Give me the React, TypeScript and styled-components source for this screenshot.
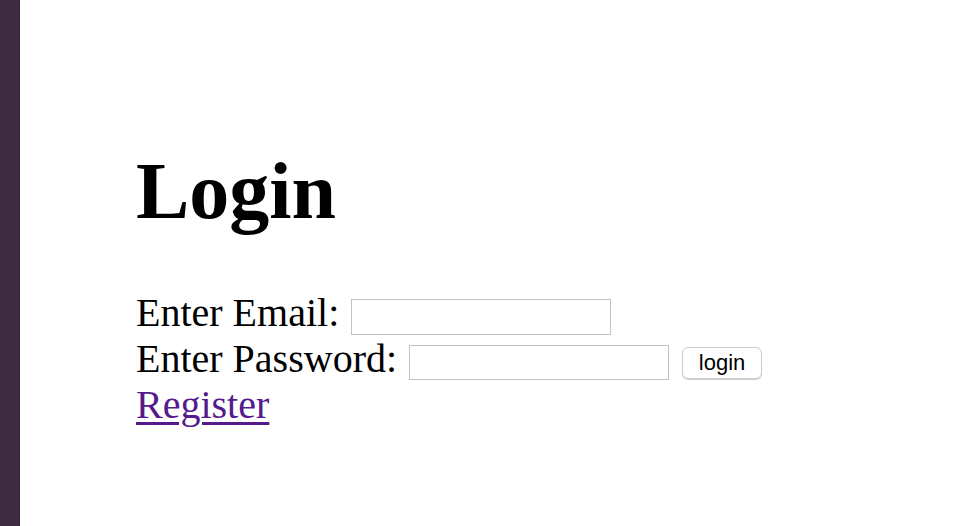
import React from "react";
import styled, { createGlobalStyle } from "styled-components";

const Global = createGlobalStyle`
  html, body { margin: 0; padding: 0; background: #ffffff; }
  body { font-family: "Liberation Serif", "Times New Roman", serif; color: #000; }
`;

const Page = styled.div`
  display: flex;
  min-height: 100vh;
`;

const Strip = styled.div`
  width: 20px;
  flex: 0 0 20px;
  background: #3e2c40;
  box-shadow: inset -1px 0 0 #35253a;
`;

const Main = styled.main`
  flex: 1;
  padding: 145px 0 0 116px;
`;

const Title = styled.h1`
  margin: 0 0 53px;
  font-size: 80px;
  font-weight: bold;
  line-height: 92px;
`;

const Form = styled.form`
  display: flex;
  flex-direction: column;
  font-size: 40px;
  line-height: 46px;
`;

const Row = styled.div`
  display: flex;
  align-items: flex-start;
  height: 46px;
`;

const Label = styled.label`
  white-space: nowrap;
`;

const Field = styled.input`
  box-sizing: border-box;
  width: 260px;
  height: ${(p) => p.$h}px;
  margin: 8.5px 0 0 12px;
  border: 1px solid #c2c2c2;
  padding: 0 4px;
  background: #fff;
  outline: none;
  font-size: 16px;
`;

const Button = styled.button`
  box-sizing: border-box;
  height: 32px;
  width: 80px;
  margin: 10.5px 0 0 13px;
  padding: 0;
  border: 1px solid #cdcdcd;
  border-radius: 6px;
  background: #fff;
  box-shadow: 0 1px 1px rgba(0, 0, 0, 0.18);
  font-family: "Liberation Sans", Arial, sans-serif;
  font-size: 22px;
  line-height: 30px;
  color: #000;
`;

const RegisterLink = styled.a`
  color: #551a8b;
  text-decoration: underline;
  text-decoration-thickness: 3px;
  text-underline-offset: 4px;
`;

export default function App() {
  return (
    <>
      <Global />
      <Page>
        <Strip />
        <Main>
          <Title>Login</Title>
          <Form onSubmit={(e) => e.preventDefault()}>
            <Row>
              <Label>Enter Email:</Label>
              <Field type="email" $h={36} />
            </Row>
            <Row>
              <Label>Enter Password:</Label>
              <Field type="password" $h={35} />
              <Button type="submit">login</Button>
            </Row>
            <Row>
              <RegisterLink href="#register">Register</RegisterLink>
            </Row>
          </Form>
        </Main>
      </Page>
    </>
  );
}
